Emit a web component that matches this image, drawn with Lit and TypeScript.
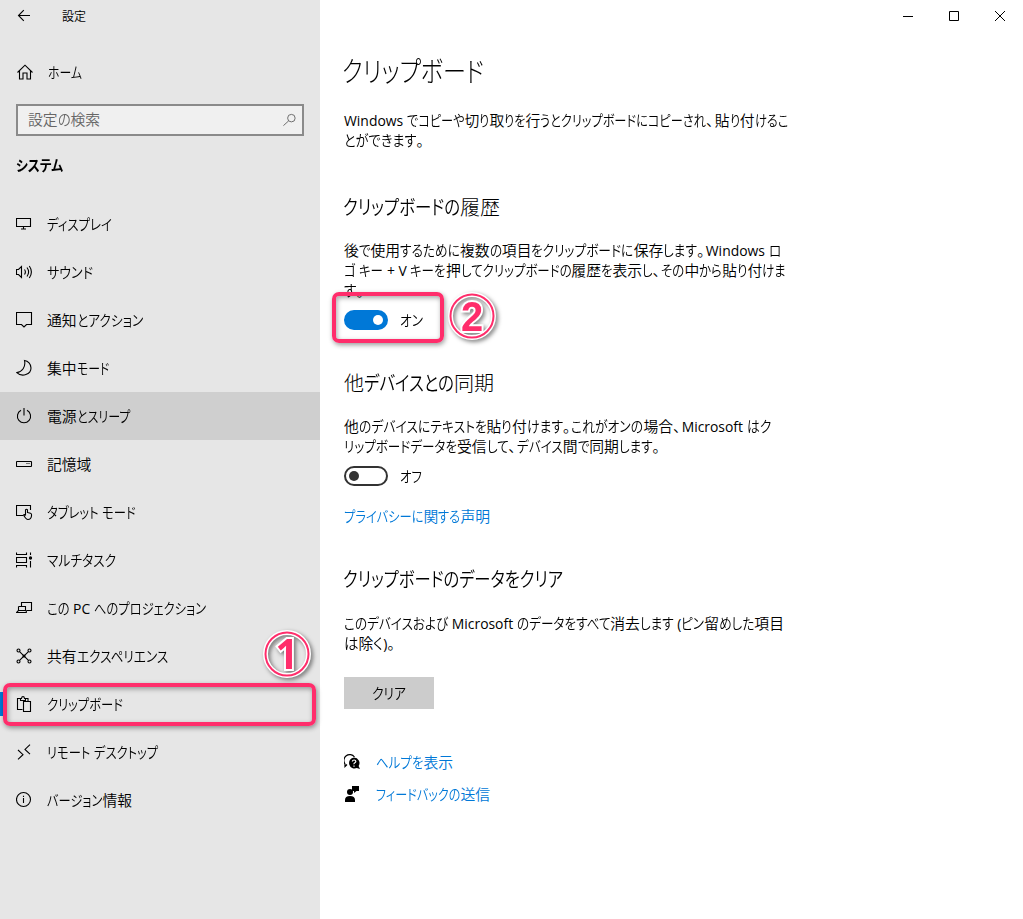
import { LitElement, html, css, svg } from "lit";
import { customElement, property } from "lit/decorators.js";

const RUNS = /([、。]|[\u3003-\u30ff]+|[\x20-\x7e]+)/;
const kind = (t: string) => (/^[、。]$/.test(t) ? "stop" : /^[\u3003-\u30ff]/.test(t) ? "kana" : /^[\x20-\x7e]/.test(t) ? "latin" : "kanji");

/** One line of text whose kana runs are condensed until the line has the given width. */
@customElement("fit-text")
class FitText extends LitElement {
  @property() text = "";
  @property({ type: Number }) w = 0;
  static styles = css`
    :host { display: block; white-space: pre; }
    .line { display: flex; align-items: baseline; }
    .run { display: block; flex: none; }
    .kana { font-feature-settings: "palt"; transform-origin: 0 50%; }
    .kanji { font-weight: var(--kanji-weight, inherit); }
    .stop { font-feature-settings: "palt"; width: 0.58em; }
    .latin { font-family: "Open Sans", "Noto Sans", sans-serif; font-size: 0.94em; font-weight: 400; line-height: 1; }
  `;
  render() {
    return html`<div class="line">${this.text.split(RUNS).filter(Boolean).map((t) =>
      html`<span class="run ${kind(t)}">${t}</span>`)}</div>`;
  }
  firstUpdated() {
    this.fit();
    document.fonts.ready.then(() => this.fit());
  }
  fit() {
    const runs = [...this.renderRoot.querySelectorAll<HTMLElement>(".run")];
    for (const r of runs) { r.style.transform = ""; r.style.width = ""; }
    let kana = 0, rest = 0;
    const widths = runs.map((r) => r.getBoundingClientRect().width);
    runs.forEach((r, i) => { if (r.classList.contains("kana")) kana += widths[i]; else rest += widths[i]; });
    if (!kana || !this.w) return;
    const k = (this.w - rest) / kana;
    runs.forEach((r, i) => {
      if (!r.classList.contains("kana")) return;
      r.style.width = `${widths[i] * k}px`;
      r.style.transform = `scaleX(${k})`;
    });
  }
}

const icons: Record<string, unknown> = {
  back: svg`<path d="M3.500 8.500H15M8.800 3.200L3.500 8.500l5.300 5.300"/>`,
  home: svg`<path d="M1.500 9.500L9 2.200 16.500 9.500M3.500 7.700v8.300h3.500V10h4v6h3.500V7.700"/>`,
  display: svg`<path d="M.5 3.500h14v8H.5zM7.500 11.500v2.500M5 14h5"/>`,
  sound: svg`<path d="M.5 6.500h2L5.500 3.500v11L2.500 11.500h-2zM8.500 6.500q1.800 2.500 0 5M11 4.500q3.200 4.500 0 9M13.300 3q4.200 6 0 12"/>`,
  notify: svg`<path d="M.5 1.500h15v12h-5L8 16l-2.500-2.500h-5z"/>`,
  moon: svg`<path d="M8.500 1.500C10 8 6 13 .8 13.600 6 18.500 15 15.500 15 9 15 5 12 2 8.500 1.500z"/>`,
  power: svg`<path d="M8 1v7.500M5 3.300a6.600 6.600 0 1 0 6 0"/>`,
  storage: svg`<rect x=".5" y="6.500" width="15" height="5" rx=".5"/><path d="M10.500 8.500h1M12.500 8.500h1"/>`,
  tablet: svg`<path d="M7 12.500H.5v-10h14v4.500M9.500 12.500V6.800q1-1.200 2 0v3.200M11.500 9.500l3 .7q1 .3 1 1.300v1.500q-.5 3.500-3.500 3.500-2 0-4.500-4.500.8-1 2 .5"/>`,
  multi: svg`<path d="M.5 1.500v2h10v-2M.5 16.500v-2h10v2M.5 6.500h10v5H.5zM14.500 1.500v2.500M14.500 10v6.500"/><circle cx="14.500" cy="7" r="1.100" fill="currentColor"/>`,
  project: svg`<path d="M5.500 7V3.500h10v8h-5M2.500 7.500h7v4h-7M2.500 7.500v4L.5 13.500h9.800v-2"/>`,
  share: svg`<path d="M3.800 4.800l8.400 8.400M12.200 4.800l-8.400 8.400"/><circle cx="2.500" cy="3.500" r="1.500"/><circle cx="13.500" cy="3.500" r="1.500"/><circle cx="2.500" cy="14.500" r="1.500"/><circle cx="13.500" cy="14.500" r="1.500"/><circle cx="8" cy="9" r="1" fill="currentColor"/>`,
  clip: svg`<path d="M6.500 14.500h-5v-11h2.500M9.500 3.500h2.500v3M4.500 5.500v-2h1q.2-2 1.500-2t1.500 2h1v2zM7.500 6.500h7v10h-7z"/>`,
  remote: svg`<path d="M2 7l5 4.700-5 4.700M14 1.700L9 6.400 14 11.100"/>`,
  info: svg`<circle cx="7.500" cy="8.500" r="7"/><path d="M7.500 7v5M7.500 4.800v1.200"/>`,
};
const icon = (name: string) => html`<svg class="icon" width="18" height="18" viewBox="0 0 18 18">${icons[name]}</svg>`;

const nav: [string, string, number][] = [
  ["display", "ディスプレイ", 65], ["sound", "サウンド", 46], ["notify", "通知とアクション", 96],
  ["moon", "集中モード", 62], ["power", "電源とスリープ", 83], ["storage", "記憶域", 45],
  ["tablet", "タブレット モード", 89], ["multi", "マルチタスク", 69], ["project", "この PC へのプロジェクション", 159],
  ["share", "共有エクスペリエンス", 121], ["clip", "クリップボード", 76], ["remote", "リモート デスクトップ", 111],
  ["info", "バージョン情報", 85],
];
const line = (text: string, w: number) => html`<fit-text .text=${text} .w=${w}></fit-text>`;

@customElement("app-root")
class AppRoot extends LitElement {
  static styles = css`
    :host { display: block; position: relative; width: 1023px; height: 919px; overflow: hidden; background: #fff; color: #000;
      font: 350 14.8px/20px "Noto Sans CJK JP", sans-serif; }
    .window { display: flex; height: 100%; }
    .side { width: 320px; flex: none; background: #e6e6e6; display: flex; flex-direction: column; }
    .icon { fill: none; stroke: currentColor; stroke-width: 1.1; flex: none; display: block; }
    .bar { display: flex; align-items: center; height: 32px; padding-left: 15px; gap: 29px; font-size: 12px; }
    .home { display: flex; align-items: center; gap: 14px; height: 48px; margin-top: 16px; padding-left: 16px; }
    .search { box-sizing: border-box; margin: 8px 16px 0; height: 32px; border: 2px solid #8a8a8a; background: #f0f0f0; color: #666;
      display: flex; align-items: center; justify-content: space-between; padding: 0 5px 2px 10px; }
    .search .icon { width: 15px; margin-top: 2px; stroke-width: 1; }
    .group { font-weight: 700; padding: 19px 0 0 16px; height: 45px; }
    .nav { display: flex; align-items: center; gap: 13px; height: 48px; padding-left: 16px; box-sizing: border-box; flex: none; }
    .nav.hover { background: #cfcfcf; }
    .nav.current { background: linear-gradient(#0078d7, #0078d7) 0 50% / 4px 24px no-repeat; }
    .main { flex: 1; display: flex; flex-direction: column; align-items: flex-start; padding-left: 24px; }
    .caption { align-self: flex-end; display: flex; height: 32px; }
    .caption svg { width: 46px; height: 32px; fill: none; stroke: #000; }
    h1, h2 { margin: 0 0 0 -1px; font-weight: 350; --kanji-weight: 300; }
    h1 { font-size: 28px; line-height: 36px; margin: 20px 0 0 -2px; font-weight: 300; }
    h2 { font-size: 20px; line-height: 28px; }
    h2.h-b { margin-left: 0; }
    .p1 { margin-top: 22px; } .h-a { margin-top: 43px; } .p2 { margin: 19px 0 1px; } .p2.last { margin: 20px 0 0; }
    .h-b, .h-c { margin-top: 39px; }
    .switch { display: flex; align-items: center; gap: 12px; height: 20px; margin-top: 9px; }
    .track { width: 44px; height: 20px; box-sizing: border-box; border-radius: 10px; border: 2px solid #333; display: flex; align-items: center; padding: 0 3px; }
    .track::after { content: ""; width: 10px; height: 10px; border-radius: 50%; background: #333; }
    .track.on { background: #0078d7; border-color: #0078d7; justify-content: flex-end; }
    .track.on::after { background: #fff; }
    .link { color: #0078d7; }
    .privacy { margin-top: 20px; }
    .clear { width: 90px; height: 32px; background: #ccc; display: flex; align-items: center; justify-content: center; margin-top: 24px; }
    .help { display: flex; align-items: center; gap: 16px; height: 32px; }
    .help.first { margin-top: 37px; }
    .help svg { width: 16px; height: 16px; color: #000; }
    .mark { position: absolute; box-sizing: border-box; border: 4px solid #ff2d6b; border-radius: 7px;
      box-shadow: 1px 2px 5px rgba(0,0,0,.4), inset 1px 2px 5px rgba(0,0,0,.35); }
    .m1 { left: 3px; top: 683px; width: 313px; height: 43px; }
    .m2 { left: 332px; top: 292px; width: 112px; height: 51px; }
    .badge { position: absolute; width: 48px; height: 48px; overflow: visible; filter: drop-shadow(2px 2px 2px rgba(0,0,0,.5)); }
    .b1 { left: 263px; top: 630px; } .b2 { left: 448px; top: 292px; }
    .badge text { font: 700 42px "Liberation Sans", sans-serif; paint-order: stroke; stroke: #fff; stroke-width: 4px; fill: #ff2d6b; text-anchor: middle; }
    .badge.b1 text { font-family: "Open Sans", sans-serif; }
  `;
  badge(n: string, cls: string) {
    return html`<svg class="badge ${cls}" viewBox="0 0 48 48"><circle cx="24" cy="24" r="21.500" fill="none" stroke="#fff" stroke-width="5"/><circle cx="24" cy="24" r="21.500" fill="none" stroke="#ff2d6b" stroke-width="2"/><text transform="translate(24 39) scale(.95 1)">${n}</text></svg>`;
  }
  render() {
    return html`<div class="window">
      <div class="side">
        <div class="bar">${icon("back")}${line("設定", 24)}</div>
        <div class="home">${icon("home")}${line("ホーム", 34)}</div>
        <div class="search">${line("設定の検索", 72)}<svg class="icon" width="15" height="16" viewBox="0 0 16 16"><circle cx="10" cy="6" r="4"/><path d="M7 9L1.500 14"/></svg></div>
        <div class="group">${line("システム", 47)}</div>
        ${nav.map(([i, t, w]) => html`<div class="nav ${i === "power" ? "hover" : i === "clip" ? "current" : ""}">${icon(i)}${line(t, w)}</div>`)}
      </div>
      <div class="main">
        <div class="caption">
          <svg viewBox="0 0 46 32"><path d="M18 16.500h10"/></svg>
          <svg viewBox="0 0 46 32"><path d="M18.500 11.500h9v9h-9z"/></svg>
          <svg viewBox="0 0 46 32"><path d="M18 11l10 10M28 11L18 21"/></svg>
        </div>
        <h1>${line("クリップボード", 142)}</h1>
        <div class="p1">${line("Windows でコピーや切り取りを行うとクリップボードにコピーされ、貼り付けるこ", 444)}${line("とができます。", 81)}</div>
        <h2 class="h-a">${line("クリップボードの履歴", 157)}</h2>
        <div class="p2">${line("後で使用するために複数の項目をクリップボードに保存します。Windows ロ", 437)}${line("ゴ キー + V キーを押してクリップボードの履歴を表示し、その中から貼り付けま", 442)}${line("す。", 21)}</div>
        <div class="switch"><div class="track on"></div>${line("オン", 23)}</div>
        <h2 class="h-b">${line("他デバイスとの同期", 150)}</h2>
        <div class="p2">${line("他のデバイスにテキストを貼り付けます。これがオンの場合、Microsoft はク", 427)}${line("リップボードデータを受信して、デバイス間で同期します。", 317)}</div>
        <div class="switch"><div class="track"></div>${line("オフ", 22)}</div>
        <div class="link privacy">${line("プライバシーに関する声明", 146)}</div>
        <h2 class="h-c">${line("クリップボードのデータをクリア", 220)}</h2>
        <div class="p2 last">${line("このデバイスおよび Microsoft のデータをすべて消去します (ピン留めした項目", 440)}${line("は除く)。", 52)}</div>
        <div class="clear">${line("クリア", 34)}</div>
        <div class="help first link"><svg viewBox="0 0 16 16"><path d="M3 10.500L1 12.500V10A5.300 5.300 0 1 1 10.500 3" fill="none" stroke="currentColor" stroke-width="1.200"/><path d="M10 3.500a5.500 5.500 0 0 1 4.600 8.500l1.400 3-3.200-1A5.500 5.500 0 1 1 10 3.500z" fill="currentColor"/><path d="M8.300 7.500q.2-1.500 1.800-1.500t1.700 1.400q0 .9-1 1.400t-.7 1.400M10 11.500v1.200" fill="none" stroke="#fff" stroke-width="1.200"/></svg>${line("ヘルプを表示", 77)}</div>
        <div class="help link"><svg viewBox="0 0 16 16"><path d="M8 0h7v5h-2.500L10 7V5H8zM1 16v-2q0-4 5-4t5 4v2z" fill="currentColor"/><circle cx="6" cy="6" r="3" fill="currentColor"/></svg>${line("フィードバックの送信", 114)}</div>
      </div>
    </div>
    <div class="mark m1"></div><div class="mark m2"></div>
    ${this.badge("1", "b1")}${this.badge("2", "b2")}`;
  }
}
